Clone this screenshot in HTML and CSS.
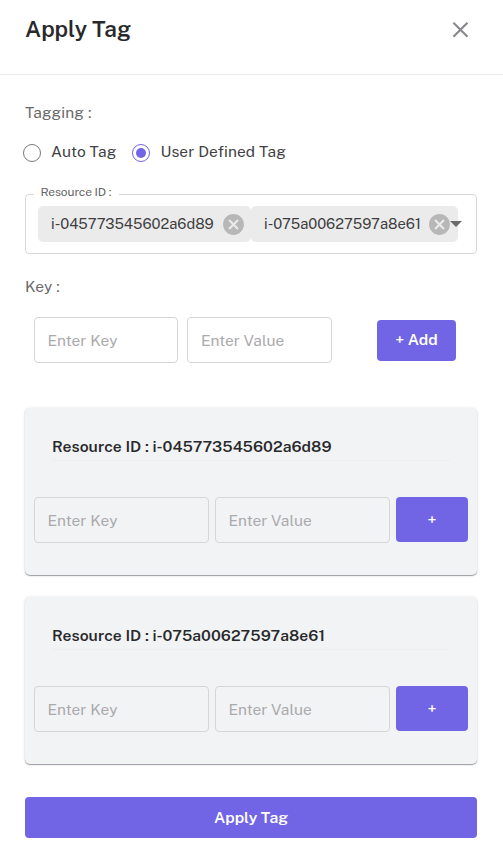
FILE: index.html
```html
<!DOCTYPE html>
<html lang="en">
<head>
<meta charset="utf-8">
<title>Apply Tag</title>
<link rel="stylesheet" href="styles.css">
</head>
<body>
<header class="header">
  <h1 class="title">Apply Tag</h1>
  <button class="close" aria-label="Close"><svg width="24" height="24" viewBox="0 0 24 24"><path d="M4.4 4.7 18.5 18.8M18.5 4.7 4.4 18.8" stroke="#89888c" stroke-width="2.1" fill="none"/></svg></button>
</header>
<main class="content">
  <p class="label tagging">Tagging :</p>
  <div class="radios">
    <label class="option"><span class="radio"></span><span class="option-label">Auto Tag</span></label>
    <label class="option"><span class="radio checked"></span><span class="option-label">User Defined Tag</span></label>
  </div>
  <div class="select">
    <span class="legend"><span class="legend-text">Resource ID :</span></span>
    <div class="chip first"><span class="chip-text">i-045773545602a6d89</span><svg class="remove" viewBox="0 0 24 24"><path d="M12 2C6.47 2 2 6.47 2 12s4.47 10 10 10 10-4.47 10-10S17.53 2 12 2zm5 13.59L15.59 17 12 13.41 8.41 17 7 15.59 10.59 12 7 8.41 8.41 7 12 10.59 15.59 7 17 8.41 13.41 12 17 15.59z"/></svg></div>
    <div class="chip second"><span class="chip-text">i-075a00627597a8e61</span><svg class="remove" viewBox="0 0 24 24"><path d="M12 2C6.47 2 2 6.47 2 12s4.47 10 10 10 10-4.47 10-10S17.53 2 12 2zm5 13.59L15.59 17 12 13.41 8.41 17 7 15.59 10.59 12 7 8.41 8.41 7 12 10.59 15.59 7 17 8.41 13.41 12 17 15.59z"/></svg></div>
    <svg class="arrow" viewBox="0 0 12 6"><path d="M0 0h12L6 6z"/></svg>
  </div>
  <p class="label key">Key :</p>
  <div class="add-row">
    <input class="field key-field" placeholder="Enter Key">
    <input class="field value-field" placeholder="Enter Value">
    <button class="btn add">+ Add</button>
  </div>
  <section class="card">
    <h2 class="card-title">Resource ID : i-045773545602a6d89</h2>
    <div class="card-row">
      <input class="field key-field" placeholder="Enter Key">
      <input class="field value-field" placeholder="Enter Value">
      <button class="btn plus">+</button>
    </div>
  </section>
  <section class="card">
    <h2 class="card-title">Resource ID : i-075a00627597a8e61</h2>
    <div class="card-row">
      <input class="field key-field" placeholder="Enter Key">
      <input class="field value-field" placeholder="Enter Value">
      <button class="btn plus">+</button>
    </div>
  </section>
  <button class="btn apply">Apply Tag</button>
</main>
</body>
</html>
```
FILE: styles.css
```css
* { box-sizing: border-box; }
body { margin: 0; background: #fff; color: #414143; font-family: "Public Sans", Inter, sans-serif; font-size: 15.5px; }
h1, h2, p { margin: 0; }
button { border: 0; padding: 0; font-family: inherit; }
.header { display: flex; justify-content: space-between; height: 75px; padding: 14px 30px 0 25px; border-bottom: 1px solid #ececed; }
.title { font-size: 22.5px; line-height: 30px; font-weight: 600; letter-spacing: -.05px; color: #29292b; }
.close { display: flex; width: 24px; height: 24px; margin-top: 4px; background: none; }
.content { display: flex; flex-direction: column; padding: 26px 26px 0 25px; }
.label { line-height: 22px; color: #6a6a6c; letter-spacing: .08px; }
.radios { display: flex; gap: 16px; margin: 18px 0 0 -2px; height: 22px; line-height: 22px; }
.option { display: flex; align-items: center; gap: 10px; white-space: nowrap; letter-spacing: .1px; }
.option-label { margin-top: -2px; }
.radio { flex: none; display: flex; align-items: center; justify-content: center; width: 18px; height: 18px; margin-top: 2px; border: 1px solid #79797b; border-radius: 50%; }
.radio.checked { border-color: #7265e5; }
.radio.checked::after { content: ""; width: 10px; height: 10px; border-radius: 50%; background: #7265e5; }
.select { position: relative; display: flex; height: 60px; margin-top: 31px; padding: 11px 0 0 12px; border: 1px solid #d8d8d9; border-radius: 4px; }
.legend { position: absolute; left: 8px; top: -11px; width: 85px; padding-left: 6.5px; background: #fff; font-size: 12px; line-height: 16px; letter-spacing: -.13px; color: #656567; white-space: nowrap; }
.chip { display: flex; align-items: center; justify-content: space-between; height: 36px; padding: 0 5px 0 13px; border-radius: 5px; background: #ebebeb; color: #3e3e40; font-size: 14.7px; white-space: nowrap; }
.chip-text { margin-top: -1px; }
.chip.first { width: 213px; }
.chip.second { width: 207px; padding-right: 6px; }
.remove { flex: none; width: 25px; height: 25px; fill: #b7b7b7; }
.arrow { position: absolute; left: 424px; top: 26px; width: 12px; height: 6px; fill: #6b6b6d; }
.key { margin-top: 21px; }
.add-row { display: flex; align-items: center; height: 46px; margin: 20px 0 0 9px; }
.add-row .field { width: 144px; margin-right: 9px; }
.add-row .value-field { width: 145px; margin-right: 45px; padding-left: 13px; }
.field { min-width: 0; height: 46px; padding: 0 12.5px; border: 1px solid #d6d6d8; border-radius: 4px; background: transparent; font-family: inherit; font-size: 15.5px; letter-spacing: .06px; }
.field::placeholder { color: #aaaaac; opacity: 1; }
.btn { border-radius: 4px; background: #7265e5; color: #fff; font-size: 15.7px; font-weight: 600; letter-spacing: -.02px; }
.add { width: 79px; height: 41px; padding-bottom: 2px; }
.card { height: 167px; margin-top: 45px; padding: 28px 9px 0; border-radius: 5px; background: #f2f3f5; box-shadow: 0 1px 1px #9b9da1, 0 0 3px rgba(60, 60, 70, .12); }
.card + .card { margin-top: 22px; }
.card-title { height: 25px; margin: 0 18px; border-bottom: 1px solid #edeef0; font-size: 15.7px; line-height: 21px; font-weight: 600; letter-spacing: .03px; color: #29292b; white-space: nowrap; }
.card-row { display: flex; gap: 6px; margin-top: 36px; }
.card-row .field { width: 175px; }
.plus { width: 72px; height: 45px; }
.apply { height: 41px; margin-top: 33px; }
```
